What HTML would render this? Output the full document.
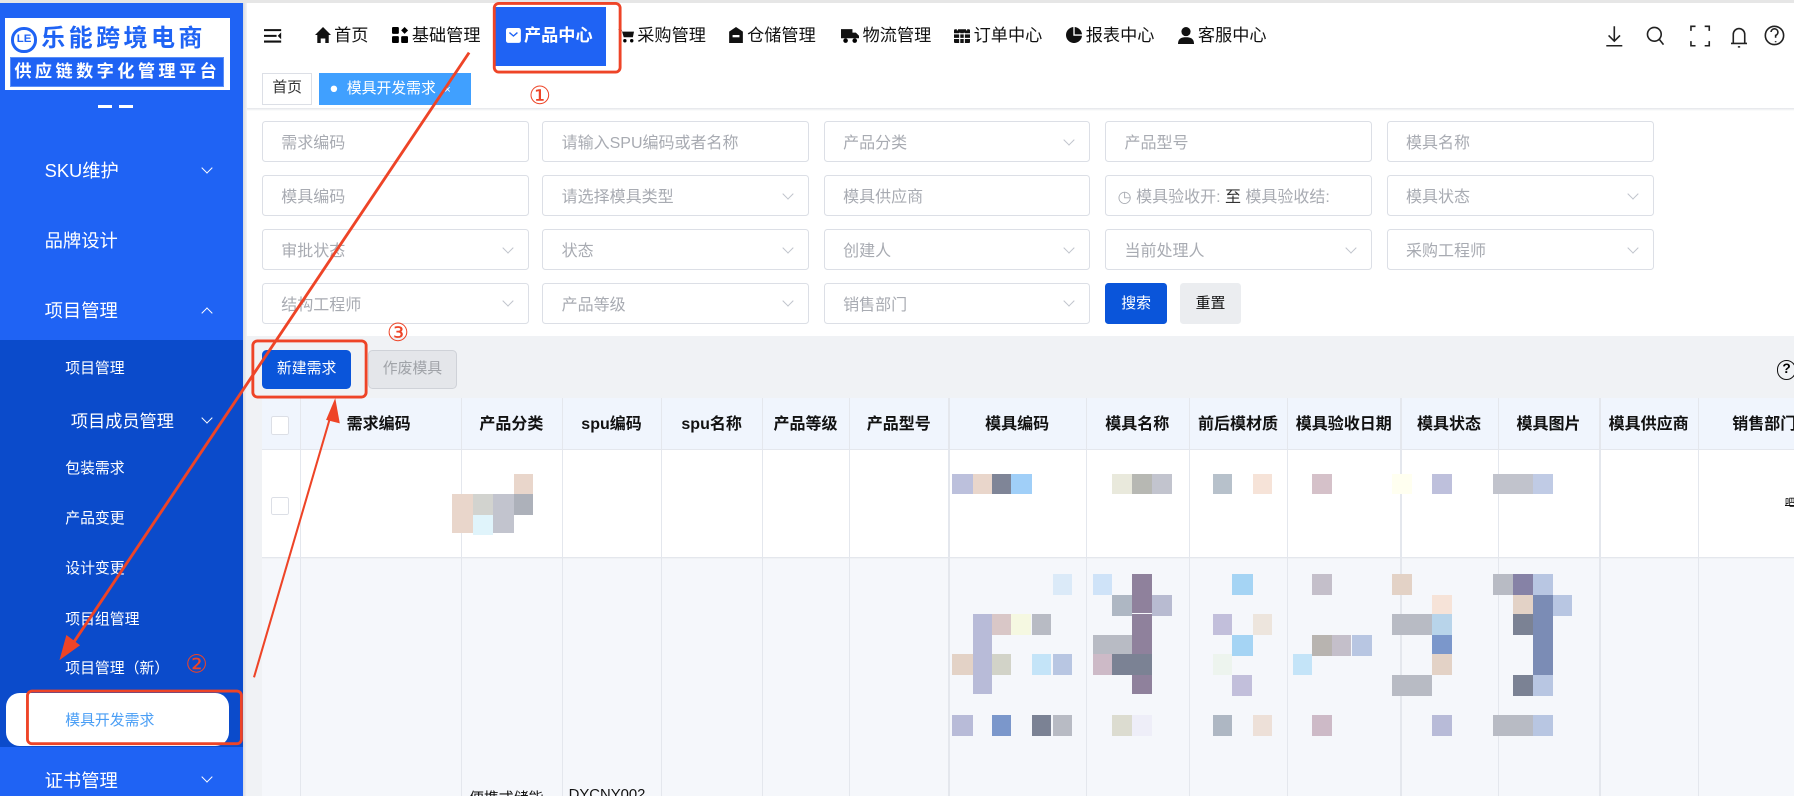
<!DOCTYPE html>
<html><head><meta charset="utf-8"><style>
*{box-sizing:border-box;margin:0;padding:0}
html,body{width:1794px;height:796px;overflow:hidden;background:#fff}
#r{position:relative;width:1568px;height:696px;zoom:1.14413;font-family:"Liberation Sans","Noto Sans CJK SC",sans-serif;overflow:hidden;background:#fff}
.a{position:absolute}
.sb{left:0;top:3px;width:212px;height:693px;background:#1f63f4}
.sub{left:0;top:297px;width:212px;height:356px;background:#0b4bcb}
.mi{position:absolute;color:#fff;font-size:16px;line-height:20px}
.si{position:absolute;color:#fff;font-size:13px;line-height:18px;left:57px}
.chev{position:absolute;left:177px;width:7px;height:7px;border-right:1.3px solid #fff;border-bottom:1.3px solid #fff;transform:rotate(45deg)}
.nav{position:absolute;top:21px;font-size:15px;color:#111;line-height:20px;display:flex;align-items:center;gap:3px}
.in{position:absolute;height:36px;border:1px solid #dcdfe6;border-radius:3px;background:#fff;color:#a8abb2;font-size:14px;line-height:38px;padding-left:16px}
.in .dv{position:absolute;right:14px;top:12px;width:7px;height:7px;border-right:1px solid #c0c4cc;border-bottom:1px solid #c0c4cc;transform:rotate(45deg)}
.th{position:absolute;top:348px;height:45px;line-height:47px;font-size:14px;font-weight:bold;color:#111;text-align:center}
.vl{position:absolute;width:1px;background:#e4e7ed}
.px{position:absolute;height:18px}
</style></head><body><div id="r">
<div class="a" style="left:0;top:0;width:1568px;height:3px;background:#e6e6e6"></div>
<div class="a sb"></div>
<div class="a sub"></div>
<div class="a" style="left:4px;top:16px;width:197px;height:63px;background:#fff"></div>
<div class="a" style="left:10px;top:24px;width:22px;height:22px;border-radius:50%;border:3px solid #1f63f4;color:#1f63f4;font-size:10px;font-weight:bold;line-height:16px;text-align:center">LE</div>
<div class="a" style="left:36px;top:19px;font-size:21px;font-weight:bold;color:#1f63f4;letter-spacing:3px;line-height:30px">乐能跨境电商</div>
<div class="a" style="left:9px;top:50px;width:187px;height:26px;background:#1f63f4;border:1px solid #5b8ff7;color:#fff;font-size:15px;font-weight:bold;letter-spacing:3px;line-height:24px;text-align:center">供应链数字化管理平台</div>
<div class="a" style="left:86px;top:92px;width:12px;height:2px;background:#fff"></div><div class="a" style="left:104px;top:92px;width:12px;height:2px;background:#fff"></div>
<div class="mi" style="left:39px;top:140px">SKU维护</div><div class="chev" style="top:143px"></div>
<div class="mi" style="left:39px;top:201px">品牌设计</div>
<div class="mi" style="left:39px;top:262px">项目管理</div><div class="chev" style="top:270px;transform:rotate(225deg)"></div>
<div class="si" style="top:314px">项目管理</div>
<div class="si" style="left:62px;top:358px;font-size:15px;line-height:20px">项目成员管理</div><div class="chev" style="top:362px"></div>
<div class="si" style="top:401px">包装需求</div>
<div class="si" style="top:445px">产品变更</div>
<div class="si" style="top:489px">设计变更</div>
<div class="si" style="top:533px">项目组管理</div>
<div class="si" style="top:576px">项目管理（新）</div>
<div class="a" style="left:5px;top:606px;width:195px;height:46px;background:#fff;border-radius:12px"></div>
<div class="si" style="top:621px;color:#4a9ef5">模具开发需求</div>
<div class="mi" style="left:39px;top:673px">证书管理</div><div class="chev" style="top:676px"></div>
<div class="a" style="left:212px;top:3px;width:4px;height:693px;background:linear-gradient(90deg,#d8dbe2,#f3f4f6)"></div>
<svg class="a" style="left:231px;top:25px" width="16" height="13"><path d="M0 1h15M0 6h11M0 11h15" stroke="#111" stroke-width="1.8"/><path d="M15 3l-3 3 3 3z" fill="#111"/></svg>
<div class="nav" style="left:275px"><svg width="14" height="14"><path d="M7 0L14 7H12V14H9V10H5V14H2V7H0Z" fill="#111"/></svg>首页</div>
<div class="nav" style="left:343px"><svg width="14" height="14"><rect x="0" y="0" width="6" height="6" rx="1"/><rect x="0" y="8" width="6" height="6" rx="1"/><rect x="8" y="8" width="6" height="6" rx="1"/><path d="M11 0l3 3-3 3-3-3z"/></svg>基础管理</div>
<div class="a" style="left:433px;top:6px;width:97px;height:52px;background:#1f63f4"></div>
<div class="nav" style="left:442px;color:#fff;font-weight:bold"><svg width="13" height="13"><rect x="0" y="0" width="13" height="13" rx="2" fill="#fff"/><path d="M3 4l3.5 3L10 4" stroke="#1f63f4" fill="none" stroke-width="1.2"/></svg>产品中心</div>
<div class="nav" style="left:540px"><svg width="14" height="14"><path d="M0 2h3l2 7h8l1-5H4" fill="#111"/><circle cx="6" cy="12" r="1.5"/><circle cx="12" cy="12" r="1.5"/></svg>采购管理</div>
<div class="nav" style="left:636px"><svg width="14" height="14"><path d="M7 0L13 4V14H1V4Z" fill="#111"/><rect x="4" y="7" width="6" height="2" fill="#fff"/></svg>仓储管理</div>
<div class="nav" style="left:735px"><svg width="16" height="13"><path d="M0 1h10v8H0zM10 4h3l3 3v2h-6z" fill="#111"/><circle cx="4" cy="11" r="2"/><circle cx="12" cy="11" r="2"/></svg>物流管理</div>
<div class="nav" style="left:834px"><svg width="14" height="14"><rect x="0" y="2" width="14" height="12" rx="1" fill="#111"/><path d="M3 0v3M11 0v3M0 6h14M0 10h14M5 5v9M9 5v9" stroke="#fff" stroke-width="1"/></svg>订单中心</div>
<div class="nav" style="left:932px"><svg width="14" height="14"><circle cx="7" cy="7" r="7" fill="#111"/><path d="M7 0v7h7" stroke="#fff" stroke-width="1.2" fill="none"/></svg>报表中心</div>
<div class="nav" style="left:1030px"><svg width="14" height="15"><circle cx="7" cy="4" r="4" fill="#111"/><path d="M0 15c0-5 3-6 7-6s7 1 7 6z" fill="#111"/></svg>客服中心</div>
<svg class="a" style="left:1402px;top:21px" width="160" height="22" fill="none" stroke="#222" stroke-width="1.4">
<path d="M9 2v13M4 10l5 5 5-5M2 19h14"/>
<circle cx="44" cy="9" r="6"/><path d="M48 13l4 5"/>
<path d="M76 6V2h4M88 2h4v4M92 15v4h-4M80 19h-4v-4"/>
<path d="M113 17V9a5 5 0 0 1 10 0v8zM111 17h14M117 20h2"/>
<circle cx="149" cy="10" r="8"/><path d="M146 7a3 3 0 1 1 4 3v2M150 15v1"/>
</svg>
<div class="a" style="left:229px;top:64px;width:44px;height:28px;border:1px solid #dcdfe6;font-size:13px;line-height:26px;text-align:center;color:#333">首页</div>
<div class="a" style="left:279px;top:64px;width:133px;height:28px;background:#40a0ff;color:#fff;font-size:13px;line-height:28px;padding-left:9px">●&nbsp;&nbsp;模具开发需求&nbsp;&nbsp;<span style="font-size:10px">×</span></div>
<div class="a" style="left:216px;top:94px;width:1352px;height:3px;background:linear-gradient(#e3e5ea,#fff)"></div>
<div class="in" style="left:229px;top:106px;width:233px">需求编码</div>
<div class="in" style="left:474px;top:106px;width:233px">请输入SPU编码或者名称</div>
<div class="in" style="left:720px;top:106px;width:233px">产品分类<i class="dv"></i></div>
<div class="in" style="left:966px;top:106px;width:233px">产品型号</div>
<div class="in" style="left:1212px;top:106px;width:234px">模具名称</div>
<div class="in" style="left:229px;top:153px;width:233px">模具编码</div>
<div class="in" style="left:474px;top:153px;width:233px">请选择模具类型<i class="dv"></i></div>
<div class="in" style="left:720px;top:153px;width:233px">模具供应商</div>
<div class="in" style="left:966px;top:153px;width:233px;padding-left:10px">◷ 模具验收开: <span style="color:#333">至</span> 模具验收结:</div>
<div class="in" style="left:1212px;top:153px;width:234px">模具状态<i class="dv"></i></div>
<div class="in" style="left:229px;top:200px;width:233px">审批状态<i class="dv"></i></div>
<div class="in" style="left:474px;top:200px;width:233px">状态<i class="dv"></i></div>
<div class="in" style="left:720px;top:200px;width:233px">创建人<i class="dv"></i></div>
<div class="in" style="left:966px;top:200px;width:233px">当前处理人<i class="dv"></i></div>
<div class="in" style="left:1212px;top:200px;width:234px">采购工程师<i class="dv"></i></div>
<div class="in" style="left:229px;top:247px;width:233px">结构工程师<i class="dv"></i></div>
<div class="in" style="left:474px;top:247px;width:233px">产品等级<i class="dv"></i></div>
<div class="in" style="left:720px;top:247px;width:233px">销售部门<i class="dv"></i></div>
<div class="a" style="left:966px;top:247px;width:54px;height:36px;background:#0a55da;border-radius:3px;color:#fff;font-size:13px;line-height:38px;text-align:center">搜索</div>
<div class="a" style="left:1031px;top:247px;width:54px;height:36px;background:#ebedf0;border-radius:3px;color:#111;font-size:13px;line-height:38px;text-align:center">重置</div>
<div class="a" style="left:216px;top:294px;width:1352px;height:402px;background:#f0f2f5"></div>
<div class="a" style="left:229px;top:306px;width:78px;height:34px;background:#0a55da;border-radius:4px;color:#fff;font-size:13px;line-height:34px;text-align:center">新建需求</div>
<div class="a" style="left:322px;top:306px;width:77px;height:34px;background:#e4e6ea;border:1px solid #cfd2d8;border-radius:4px;color:#a0a3a8;font-size:13px;line-height:32px;text-align:center">作废模具</div>
<div class="a" style="left:1553px;top:315px;width:17px;height:17px;border:1.5px solid #111;border-radius:50%;font-size:12px;font-weight:bold;line-height:14px;text-align:center">?</div>
<div class="a" style="left:229px;top:348px;width:1339px;height:45px;background:#f0f5fd;border-bottom:1px solid #e4e7ed"></div>
<div class="a" style="left:229px;top:393px;width:1339px;height:95px;background:#fff;border-bottom:1px solid #e4e7ed"></div>
<div class="a" style="left:229px;top:489px;width:1339px;height:207px;background:#f5f7fb"></div>
<div class="a" style="left:237px;top:364px;width:16px;height:16px;border:1px solid #dcdfe6;background:#fff;border-radius:2px"></div>
<div class="a" style="left:237px;top:434px;width:16px;height:16px;border:1px solid #dcdfe6;background:#fff;border-radius:2px"></div>
<div class="vl" style="left:262px;top:348px;height:348px"></div>
<div class="vl" style="left:403px;top:348px;height:348px"></div>
<div class="vl" style="left:491px;top:348px;height:348px"></div>
<div class="vl" style="left:578px;top:348px;height:348px"></div>
<div class="vl" style="left:666px;top:348px;height:348px"></div>
<div class="vl" style="left:742px;top:348px;height:348px"></div>
<div class="vl" style="left:829px;top:348px;height:348px"></div>
<div class="vl" style="left:949px;top:348px;height:348px"></div>
<div class="vl" style="left:1039px;top:348px;height:348px"></div>
<div class="vl" style="left:1125px;top:348px;height:348px"></div>
<div class="vl" style="left:1224px;top:348px;height:348px"></div>
<div class="vl" style="left:1309px;top:348px;height:348px"></div>
<div class="vl" style="left:1398px;top:348px;height:348px"></div>
<div class="vl" style="left:1484px;top:348px;height:348px"></div>
<div class="th" style="left:303px;width:60px;text-align:left">需求编码</div>
<div class="th" style="left:403px;width:88px">产品分类</div>
<div class="th" style="left:491px;width:87px">spu编码</div>
<div class="th" style="left:578px;width:88px">spu名称</div>
<div class="th" style="left:666px;width:76px">产品等级</div>
<div class="th" style="left:742px;width:87px">产品型号</div>
<div class="th" style="left:829px;width:120px">模具编码</div>
<div class="th" style="left:949px;width:90px">模具名称</div>
<div class="th" style="left:1039px;width:86px">前后模材质</div>
<div class="th" style="left:1125px;width:99px">模具验收日期</div>
<div class="th" style="left:1224px;width:85px">模具状态</div>
<div class="th" style="left:1309px;width:89px">模具图片</div>
<div class="th" style="left:1398px;width:86px">模具供应商</div>
<div class="th" style="left:1484px;width:90px;text-align:left;padding-left:30px">销售部门</div>
<div class="px" style="left:395px;top:432px;width:18px;height:34px;background:#e9d6cb"></div>
<div class="px" style="left:413px;top:432px;width:18px;background:#d2d3cf"></div>
<div class="px" style="left:413px;top:450px;width:18px;background:#e0f4fb"></div>
<div class="px" style="left:431px;top:432px;width:18px;height:34px;background:#c2c4ce"></div>
<div class="px" style="left:449px;top:414px;width:17px;background:#e9d6cb"></div>
<div class="px" style="left:449px;top:432px;width:17px;background:#adb1ba"></div>
<div class="px" style="left:832px;top:414px;width:18px;background:#bcc0dc"></div>
<div class="px" style="left:850px;top:414px;width:17px;background:#e9d6cb"></div>
<div class="px" style="left:867px;top:414px;width:17px;background:#7f8597"></div>
<div class="px" style="left:884px;top:414px;width:18px;background:#a0cff8"></div>
<div class="px" style="left:972px;top:414px;width:17px;background:#e9e9dc"></div>
<div class="px" style="left:989px;top:414px;width:18px;background:#b7b8b3"></div>
<div class="px" style="left:1007px;top:414px;width:17px;background:#c2c4ce"></div>
<div class="px" style="left:1060px;top:414px;width:17px;background:#b7c1cb"></div>
<div class="px" style="left:1095px;top:414px;width:17px;background:#f6e3d8"></div>
<div class="px" style="left:1147px;top:414px;width:17px;background:#d5c1c9"></div>
<div class="px" style="left:1217px;top:414px;width:17px;background:#fffff0"></div>
<div class="px" style="left:1252px;top:414px;width:17px;background:#bec0dc"></div>
<div class="px" style="left:1305px;top:414px;width:35px;background:#c1c3cc"></div>
<div class="px" style="left:1340px;top:414px;width:17px;background:#c0cbe5"></div>
<div class="a" style="left:1560px;top:432px;width:8px;height:10px;border-bottom:1px solid #111;font-size:9px">吧</div>
<div class="px" style="left:920px;top:502px;width:17px;background:#dbeaf8"></div>
<div class="px" style="left:955px;top:502px;width:17px;background:#cfe3f8"></div>
<div class="px" style="left:989px;top:502px;width:18px;height:34px;background:#8f819c"></div>
<div class="px" style="left:972px;top:520px;width:17px;background:#aeb7c3"></div>
<div class="px" style="left:1007px;top:520px;width:17px;background:#b8bbd1"></div>
<div class="px" style="left:1077px;top:502px;width:18px;background:#a5d4f4"></div>
<div class="px" style="left:1147px;top:502px;width:17px;background:#c4bfca"></div>
<div class="px" style="left:1217px;top:502px;width:17px;background:#e3d2c6"></div>
<div class="px" style="left:1252px;top:520px;width:17px;background:#f6e3d8"></div>
<div class="px" style="left:1305px;top:502px;width:17px;background:#b8bbc4"></div>
<div class="px" style="left:1322px;top:502px;width:18px;background:#8682a6"></div>
<div class="px" style="left:1340px;top:502px;width:17px;height:106px;background:#b8c6e2"></div>
<div class="px" style="left:1322px;top:520px;width:18px;background:#e3d2c6"></div>
<div class="px" style="left:1340px;top:520px;width:17px;height:70px;background:#7b8cb5"></div>
<div class="px" style="left:1357px;top:520px;width:17px;background:#b8c6e2"></div>
<div class="px" style="left:850px;top:537px;width:17px;height:70px;background:#b8bbd8"></div>
<div class="px" style="left:867px;top:537px;width:17px;background:#d9c7c7"></div>
<div class="px" style="left:884px;top:537px;width:17px;background:#f5f8e1"></div>
<div class="px" style="left:902px;top:537px;width:17px;background:#b8bbc4"></div>
<div class="px" style="left:989px;top:537px;width:18px;height:70px;background:#8f819c"></div>
<div class="px" style="left:955px;top:555px;width:34px;background:#b8bbc4"></div>
<div class="px" style="left:972px;top:572px;width:35px;background:#7b8294"></div>
<div class="px" style="left:955px;top:572px;width:17px;background:#cdbac7"></div>
<div class="px" style="left:1077px;top:555px;width:18px;background:#a5d4f4"></div>
<div class="px" style="left:1060px;top:537px;width:17px;background:#c2bfdb"></div>
<div class="px" style="left:1095px;top:537px;width:17px;background:#ede5dd"></div>
<div class="px" style="left:1060px;top:572px;width:17px;background:#edf4ee"></div>
<div class="px" style="left:1077px;top:590px;width:17px;background:#c2bfdb"></div>
<div class="px" style="left:1147px;top:555px;width:17px;background:#b8b4b0"></div>
<div class="px" style="left:1164px;top:555px;width:17px;background:#c4bfca"></div>
<div class="px" style="left:1182px;top:555px;width:17px;background:#b8c6e2"></div>
<div class="px" style="left:1130px;top:572px;width:17px;background:#c4e4f8"></div>
<div class="px" style="left:1217px;top:537px;width:35px;background:#b8bbc4"></div>
<div class="px" style="left:1252px;top:537px;width:17px;background:#b8d4ea"></div>
<div class="px" style="left:1252px;top:555px;width:17px;background:#7b97cb"></div>
<div class="px" style="left:1252px;top:572px;width:17px;background:#e3d2c6"></div>
<div class="px" style="left:1217px;top:590px;width:35px;background:#b8bbc4"></div>
<div class="px" style="left:1322px;top:537px;width:18px;background:#7b8294"></div>
<div class="px" style="left:1322px;top:590px;width:18px;background:#7b8294"></div>
<div class="px" style="left:832px;top:572px;width:18px;background:#e3d2c6"></div>
<div class="px" style="left:867px;top:572px;width:17px;background:#d2d3c8"></div>
<div class="px" style="left:902px;top:572px;width:17px;background:#c4e4f8"></div>
<div class="px" style="left:920px;top:572px;width:17px;background:#b8c6e2"></div>
<div class="px" style="left:832px;top:625px;width:18px;background:#b8bbd8"></div>
<div class="px" style="left:867px;top:625px;width:17px;background:#7b97cb"></div>
<div class="px" style="left:902px;top:625px;width:17px;background:#7b8294"></div>
<div class="px" style="left:920px;top:625px;width:17px;background:#b8bbc4"></div>
<div class="px" style="left:972px;top:625px;width:17px;background:#dcdcd0"></div>
<div class="px" style="left:989px;top:625px;width:18px;background:#eeeef8"></div>
<div class="px" style="left:1060px;top:625px;width:17px;background:#aeb7c3"></div>
<div class="px" style="left:1095px;top:625px;width:17px;background:#ede0d8"></div>
<div class="px" style="left:1147px;top:625px;width:17px;background:#cdbac7"></div>
<div class="px" style="left:1252px;top:625px;width:17px;background:#b8bbd8"></div>
<div class="px" style="left:1305px;top:625px;width:35px;background:#b8bbc4"></div>
<div class="px" style="left:1340px;top:625px;width:17px;background:#b8c6e2"></div>
<div class="a" style="left:410px;top:688px;font-size:13px;color:#111">便携式储能</div>
<div class="a" style="left:497px;top:688px;font-size:13px;color:#111">DYCNY002</div>
<svg class="a" style="left:0;top:0" width="1568" height="696" fill="none" stroke="#ee4427">
<rect x="432" y="3" width="110" height="60" rx="4" stroke-width="2.5"/>
<rect x="24" y="604" width="187" height="46" rx="4" stroke-width="2.5"/>
<rect x="221" y="298" width="99" height="49" rx="4" stroke-width="2.5"/>
<path d="M410 46L60 568" stroke-width="2.5"/>
<path d="M52 577l6-22 12 9z" fill="#ee4427" stroke="none"/>
<path d="M222 592L290 360" stroke-width="1.8"/>
<path d="M293 348l4 22-12-3z" fill="#ee4427" stroke="none"/>
<g stroke="none" fill="#ee4427" font-family="Liberation Sans,sans-serif" font-size="22">
<text x="462" y="91">①</text><text x="162" y="588">②</text><text x="338" y="298">③</text></g>
</svg>
</div></body></html>
